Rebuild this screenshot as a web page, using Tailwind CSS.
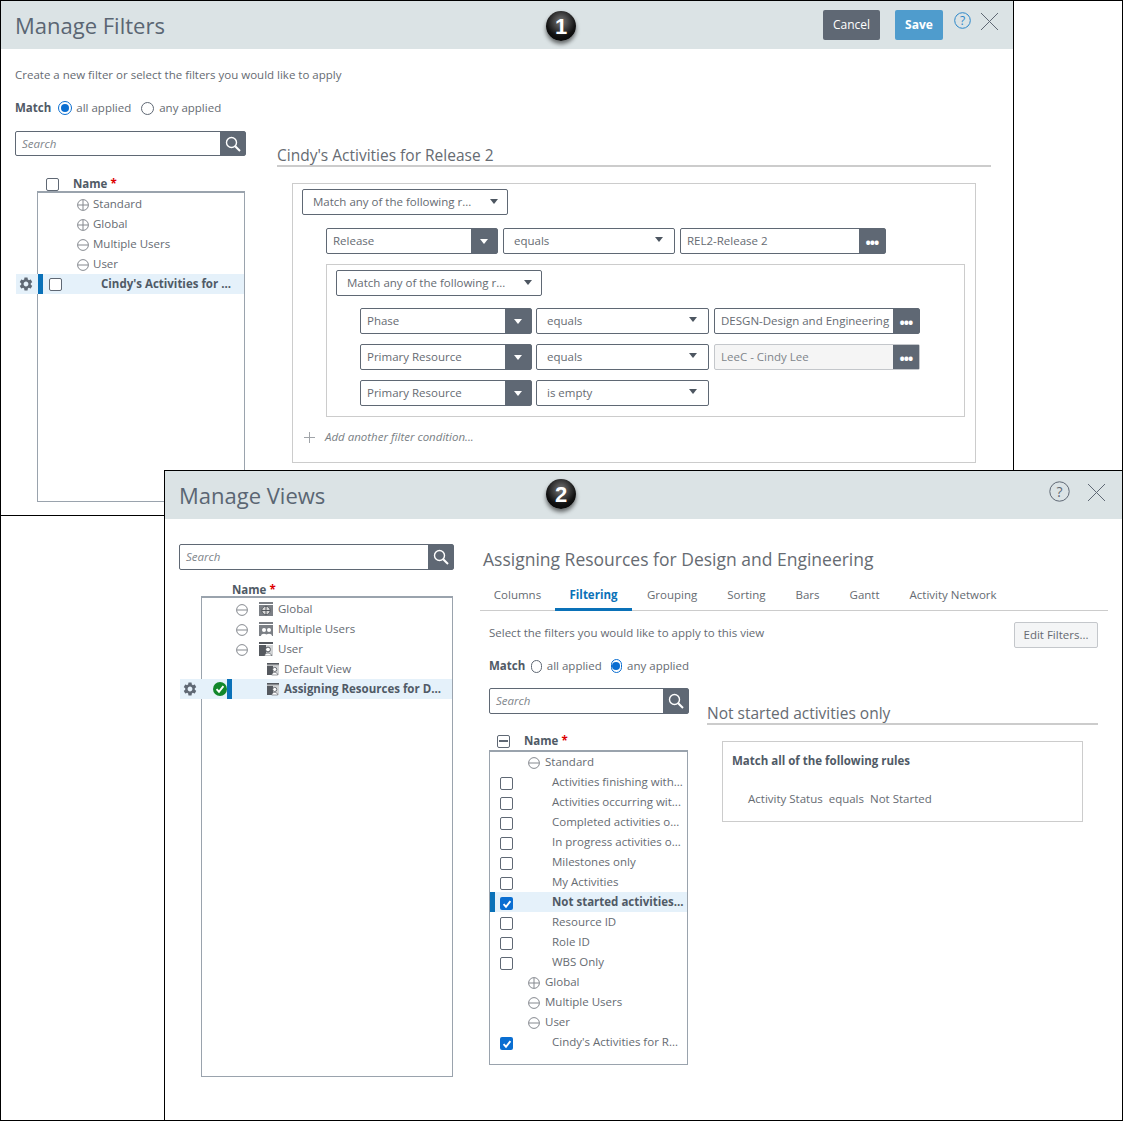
<!DOCTYPE html>
<html><head><meta charset="utf-8"><title>Manage Filters and Views</title>
<script src="https://cdn.jsdelivr.net/npm/@tailwindcss/browser@4"></script></head>
<body class="m-0 bg-white">
<svg class="hidden"><defs>
<symbol id="gear" viewBox="0 0 24 24"><path fill="#5f6874" d="M19.14 12.94c.04-.3.06-.61.06-.94 0-.32-.02-.64-.07-.94l2.03-1.58c.18-.14.23-.41.12-.61l-1.92-3.32c-.12-.22-.37-.29-.59-.22l-2.39.96c-.5-.38-1.03-.7-1.62-.94l-.36-2.54c-.04-.24-.24-.41-.48-.41h-3.84c-.24 0-.43.17-.47.41l-.36 2.54c-.59.24-1.13.57-1.62.94l-2.39-.96c-.22-.08-.47 0-.59.22L2.74 8.87c-.12.21-.08.47.12.61l2.03 1.58c-.05.3-.09.63-.09.94s.02.64.07.94l-2.03 1.58c-.18.14-.23.41-.12.61l1.92 3.32c.12.22.37.29.59.22l2.39-.96c.5.38 1.03.7 1.62.94l.36 2.54c.05.24.24.41.48.41h3.84c.24 0 .44-.17.47-.41l.36-2.54c.59-.24 1.13-.56 1.62-.94l2.39.96c.22.08.47 0 .59-.22l1.92-3.32c.12-.22.07-.47-.12-.61l-2.01-1.58zM12 15.6c-1.98 0-3.6-1.62-3.6-3.6s1.62-3.6 3.6-3.6 3.6 1.62 3.6 3.6-1.62 3.6-3.6 3.6z"/></symbol>
<symbol id="mag" viewBox="0 0 16 16"><circle cx="6.5" cy="6.5" r="5" fill="none" stroke="#fff" stroke-width="1.4"/><path d="M10.2 10.2L15 15" stroke="#fff" stroke-width="2" fill="none"/></symbol>
<symbol id="plus" viewBox="0 0 12 12"><circle cx="6" cy="6" r="5.4" fill="none" stroke="#85898f"/><path d="M1 6H11M6 1V11" stroke="#85898f" fill="none"/></symbol>
<symbol id="minus" viewBox="0 0 12 12"><circle cx="6" cy="6" r="5.4" fill="none" stroke="#85898f"/><path d="M1 6H11" stroke="#85898f" fill="none"/></symbol>
<symbol id="tri" viewBox="0 0 8 5"><path d="M0 0H8L4 5Z"/></symbol>
<symbol id="chk" viewBox="0 0 14 14"><path d="M3 7.2L5.8 10.2L11 3.6" fill="none" stroke="#fff" stroke-width="2.2"/></symbol>
<symbol id="vglobal" viewBox="0 0 14 14"><rect width="14" height="14" fill="#7b7f85"/><rect y="2" width="14" height="1" fill="#fff"/><circle cx="7" cy="8.5" r="4.2" fill="#d6d6d6" stroke="#55595f"/><path d="M2.8 8.5H11.2M7 4.3V12.7" stroke="#55595f"/></symbol>
<symbol id="vusers" viewBox="0 0 14 14"><rect width="14" height="14" fill="#7b7f85"/><rect y="2" width="14" height="1" fill="#fff"/><circle cx="5" cy="8" r="2" fill="#fff"/><circle cx="10" cy="8" r="2" fill="#fff"/><path d="M2 14c0-3 6-3 6 0zM7 14c0-3 6-3 6 0z" fill="#fff"/></symbol>
<symbol id="vuser" viewBox="0 0 14 14"><rect width="14" height="14" fill="#55595f"/><rect y="2" width="14" height="1" fill="#fff"/><rect x="7" y="3" width="7" height="11" fill="#d0d2d4"/><circle cx="9" cy="7.5" r="2.4" fill="#fff" stroke="#55595f"/><path d="M5.5 14c0-4 7-4 7 0z" fill="#fff" stroke="#55595f" stroke-width=".7"/></symbol>
</defs></svg>

<main class="relative w-[1123px] h-[1121px] overflow-hidden border border-black font-['Open_Sans',sans-serif] text-[11.5px] text-[#666b72]">

<!-- Window 1 -->
<section class="absolute left-0 top-0 w-[1013px] h-[515px] border-r border-b border-black bg-white">
  <header class="relative flex items-center h-[48px] bg-[#dbe3e5] pl-[14px] pr-[14px]">
    <h1 class="text-[22px] leading-[48px] text-[#5a6673] font-normal pb-[1px]">Manage Filters</h1>
    <div class="absolute left-[545px] top-[10px] w-[30px] h-[30px] rounded-full bg-[radial-gradient(circle_at_50%_35%,#777,#111_60%,#000)] shadow-[0_3px_4px_rgba(0,0,0,.55)] flex items-center justify-center text-white font-bold text-[22px] font-['Liberation_Sans',sans-serif]">1</div>
    <div class="ml-auto flex items-start h-[48px] pt-[9px]">
      <button class="w-[57px] h-[30px] rounded-[2px] bg-[#5f6874] text-white text-[12px]">Cancel</button>
      <button class="ml-[15px] w-[48px] h-[30px] rounded-[2px] bg-[#4f9ccd] text-white text-[12px] font-bold">Save</button>
      <svg class="ml-[11px] mt-[2px] w-[17px] h-[17px]" viewBox="0 0 17 17"><circle cx="8.5" cy="8.5" r="7.8" fill="none" stroke="#2b87c9" stroke-width="1"/><text x="8.5" y="13" text-anchor="middle" font-size="12" fill="#2b87c9" font-family="Open Sans">?</text></svg>
      <svg class="ml-[9px] mt-[2px] w-[19px] h-[19px]" viewBox="0 0 19 19"><path d="M1 1L18 18M18 1L1 18" stroke="#5f6874" stroke-width="1" fill="none"/></svg>
    </div>
  </header>
  <div class="pl-[14px]">
    <p class="mt-[17px] h-[18px] leading-[18px]">Create a new filter or select the filters you would like to apply</p>
    <div class="mt-[15px] h-[18px] flex items-center">
      <b class="font-bold text-[#505a66] mr-[7px]">Match</b>
      <span class="w-[14px] h-[14px] rounded-full border border-[#0a6ed1] flex items-center justify-center mr-[4px]"><span class="w-[8px] h-[8px] rounded-full bg-[#0a6ed1]"></span></span>
      <span class="mr-[10px]">all applied</span>
      <span class="w-[13px] h-[13px] rounded-full border border-[#5f6874] mr-[5px]"></span>
      <span>any applied</span>
    </div>
    <div class="mt-[14px] flex items-start">
      <div class="w-[231px]">
        <div class="flex h-[25px] border border-[#5f6874] rounded-[2px]">
          <span class="flex-1 pl-[6px] leading-[23px] italic text-[#80858b]">Search</span>
          <span class="w-[25px] bg-[#5f6874] flex items-center justify-center"><svg class="w-[16px] h-[16px]"><use href="#mag"/></svg></span>
        </div>
        <div class="mt-[20px] h-[16px] flex items-center">
          <span class="ml-[31px] w-[13px] h-[13px] border border-[#5f6874] rounded-[2px]"></span>
          <b class="ml-[14px] font-bold text-[#505a66]">Name <span class="text-[#d00]">*</span></b>
        </div>
        <div class="relative -mt-[1px] ml-[22px] w-[208px] h-[311px] border border-[#9aa3ad] border-t-2 pt-[1px]">
          <div class="h-[20px] flex items-center pl-[39px]"><svg class="w-[12px] h-[12px] mt-[2px] mr-[4px]"><use href="#plus"/></svg>Standard</div>
          <div class="h-[20px] flex items-center pl-[39px]"><svg class="w-[12px] h-[12px] mt-[2px] mr-[4px]"><use href="#plus"/></svg>Global</div>
          <div class="h-[20px] flex items-center pl-[39px]"><svg class="w-[12px] h-[12px] mt-[2px] mr-[4px]"><use href="#minus"/></svg>Multiple Users</div>
          <div class="h-[20px] flex items-center pl-[39px]"><svg class="w-[12px] h-[12px] mt-[2px] mr-[4px]"><use href="#minus"/></svg>User</div>
          <div class="relative h-[20px] flex items-center bg-[#e5f1fa] font-bold text-[#505a66] pl-[63px]">
            <svg class="absolute -left-[19px] top-[3px] w-[15px] h-[15px]"><use href="#gear"/></svg>
            <span class="absolute -left-[22px] top-0 w-[22px] h-[20px] bg-[#e5f1fa]"></span>
            <svg class="absolute -left-[20px] top-[2px] w-[16px] h-[16px]"><use href="#gear"/></svg>
            <span class="absolute left-0 top-0 w-[5px] h-[20px] bg-[#0a71b8]"></span>
            <span class="absolute left-[11px] top-[4px] w-[13px] h-[13px] border border-[#5f6874] rounded-[2px] bg-white"></span>
            Cindy's Activities for ...
          </div>
        </div>
      </div>
      <div class="ml-[31px] w-[714px]">
        <h2 class="mt-[14px] h-[20px] leading-[20px] text-[15.5px] font-normal text-[#666b72]">Cindy's Activities for Release 2</h2>
        <div class="h-[2px] bg-[#ccc]"></div>
        <div class="mt-[16px] ml-[15px] w-[684px] h-[280px] border border-[#ccc] pl-[9px] pt-[5px]">
          <div class="flex items-center w-[206px] h-[26px] border border-[#5f6874] rounded-[2px] pl-[10px] pr-[9px]"><span class="flex-1">Match any of the following r...</span><svg class="w-[8px] h-[5px] text-[#4d5661] fill-current mb-[2px]"><use href="#tri"/></svg></div>
          <div class="mt-[13px] ml-[24px] flex h-[26px]">
            <div class="flex w-[172px] border border-[#5f6874] rounded-[2px]"><span class="flex-1 pl-[6px] leading-[24px]">Release</span><span class="w-[26px] bg-[#5f6874] flex items-center justify-center"><svg class="w-[8px] h-[5px] text-white fill-current"><use href="#tri"/></svg></span></div>
            <div class="flex items-center ml-[5px] w-[172px] border border-[#5f6874] rounded-[2px] pl-[10px] pr-[11px]"><span class="flex-1">equals</span><svg class="w-[8px] h-[5px] text-[#4d5661] fill-current mb-[3px]"><use href="#tri"/></svg></div>
            <div class="flex ml-[5px] w-[206px] border border-[#5f6874] rounded-[2px]"><span class="flex-1 pl-[6px] leading-[24px]">REL2-Release 2</span><span class="w-[26px] bg-[#5f6874] text-center text-white font-bold leading-[28px] text-[14px] tracking-[-1px]">•••</span></div>
          </div>
          <div class="mt-[10px] ml-[24px] w-[639px] h-[153px] border border-[#ccc] pl-[9px] pt-[5px]">
            <div class="flex items-center w-[206px] h-[26px] border border-[#5f6874] rounded-[2px] pl-[10px] pr-[9px]"><span class="flex-1">Match any of the following r...</span><svg class="w-[8px] h-[5px] text-[#4d5661] fill-current mb-[2px]"><use href="#tri"/></svg></div>
            <div class="mt-[12px] ml-[24px] flex h-[26px]">
              <div class="flex w-[172px] border border-[#5f6874] rounded-[2px]"><span class="flex-1 pl-[6px] leading-[24px]">Phase</span><span class="w-[26px] bg-[#5f6874] flex items-center justify-center"><svg class="w-[8px] h-[5px] text-white fill-current"><use href="#tri"/></svg></span></div>
              <div class="flex items-center ml-[4px] w-[173px] border border-[#5f6874] rounded-[2px] pl-[10px] pr-[11px]"><span class="flex-1">equals</span><svg class="w-[8px] h-[5px] text-[#4d5661] fill-current mb-[3px]"><use href="#tri"/></svg></div>
              <div class="flex ml-[5px] w-[206px] border border-[#5f6874] rounded-[2px]"><span class="flex-1 pl-[6px] leading-[24px] whitespace-nowrap">DESGN-Design and Engineering</span><span class="w-[26px] bg-[#5f6874] text-center text-white font-bold leading-[28px] text-[14px] tracking-[-1px]">•••</span></div>
            </div>
            <div class="mt-[10px] ml-[24px] flex h-[26px]">
              <div class="flex w-[172px] border border-[#5f6874] rounded-[2px]"><span class="flex-1 pl-[6px] leading-[24px]">Primary Resource</span><span class="w-[26px] bg-[#5f6874] flex items-center justify-center"><svg class="w-[8px] h-[5px] text-white fill-current"><use href="#tri"/></svg></span></div>
              <div class="flex items-center ml-[4px] w-[173px] border border-[#5f6874] rounded-[2px] pl-[10px] pr-[11px]"><span class="flex-1">equals</span><svg class="w-[8px] h-[5px] text-[#4d5661] fill-current mb-[3px]"><use href="#tri"/></svg></div>
              <div class="flex ml-[5px] w-[206px] border border-[#c4c7cb] rounded-[2px] bg-[#f5f5f5]"><span class="flex-1 pl-[6px] leading-[24px] text-[#80858b]">LeeC - Cindy Lee</span><span class="w-[26px] bg-[#5f6874] text-center text-white font-bold leading-[28px] text-[14px] tracking-[-1px]">•••</span></div>
            </div>
            <div class="mt-[10px] ml-[24px] flex h-[26px]">
              <div class="flex w-[172px] border border-[#5f6874] rounded-[2px]"><span class="flex-1 pl-[6px] leading-[24px]">Primary Resource</span><span class="w-[26px] bg-[#5f6874] flex items-center justify-center"><svg class="w-[8px] h-[5px] text-white fill-current"><use href="#tri"/></svg></span></div>
              <div class="flex items-center ml-[4px] w-[173px] border border-[#5f6874] rounded-[2px] pl-[10px] pr-[11px]"><span class="flex-1">is empty</span><svg class="w-[8px] h-[5px] text-[#4d5661] fill-current mb-[3px]"><use href="#tri"/></svg></div>
            </div>
          </div>
          <div class="mt-[12px] flex items-center h-[16px] italic text-[#7a7f85]"><svg class="ml-[2px] mr-[10px] w-[11px] h-[11px]" viewBox="0 0 11 11"><path d="M5.5 0V11M0 5.5H11" stroke="#a0a4a9" fill="none"/></svg>Add another filter condition...</div>
        </div>
      </div>
    </div>
  </div>
</section>

<!-- Window 2 -->
<section class="absolute left-[163px] top-[469px] w-[958px] h-[650px] border-l border-t border-black bg-white">
  <header class="relative flex items-center h-[48px] bg-[#dbe3e5] pl-[14px]">
    <h1 class="text-[22px] leading-[48px] text-[#5a6673] font-normal pb-[1px]">Manage Views</h1>
    <div class="absolute left-[381px] top-[8px] w-[30px] h-[30px] rounded-full bg-[radial-gradient(circle_at_50%_35%,#777,#111_60%,#000)] shadow-[0_3px_4px_rgba(0,0,0,.55)] flex items-center justify-center text-white font-bold text-[22px] font-['Liberation_Sans',sans-serif]">2</div>
    <svg class="absolute left-[884px] top-[10px] w-[21px] h-[21px]" viewBox="0 0 21 21"><circle cx="10.5" cy="10.5" r="9.7" fill="none" stroke="#5f6874" stroke-width="1"/><text x="10.5" y="15.5" text-anchor="middle" font-size="14" fill="#5f6874" font-family="Open Sans">?</text></svg>
    <svg class="absolute left-[922px] top-[12px] w-[19px] h-[19px]" viewBox="0 0 19 19"><path d="M1 1L18 18M18 1L1 18" stroke="#5f6874" stroke-width="1" fill="none"/></svg>
  </header>
  <div class="flex items-start pl-[14px]">
    <div class="w-[275px] mt-[25px]">
      <div class="flex h-[26px] border border-[#5f6874] rounded-[2px]">
        <span class="flex-1 pl-[6px] leading-[24px] italic text-[#80858b]">Search</span>
        <span class="w-[25px] bg-[#5f6874] flex items-center justify-center"><svg class="w-[16px] h-[16px]"><use href="#mag"/></svg></span>
      </div>
      <div class="mt-[12px] h-[16px] flex items-center pl-[53px]"><b class="font-bold text-[#505a66]">Name <span class="text-[#d00]">*</span></b></div>
      <div class="relative -mt-[2px] ml-[22px] w-[252px] h-[481px] border border-[#9aa3ad] border-t-2 pt-[1px]">
        <div class="h-[20px] flex items-center pl-[34px]"><svg class="w-[12px] h-[12px] mt-[2px] mr-[11px]"><use href="#minus"/></svg><svg class="w-[14px] h-[14px] mr-[5px]"><use href="#vglobal"/></svg>Global</div>
        <div class="h-[20px] flex items-center pl-[34px]"><svg class="w-[12px] h-[12px] mt-[2px] mr-[11px]"><use href="#minus"/></svg><svg class="w-[14px] h-[14px] mr-[5px]"><use href="#vusers"/></svg>Multiple Users</div>
        <div class="h-[20px] flex items-center pl-[34px]"><svg class="w-[12px] h-[12px] mt-[2px] mr-[11px]"><use href="#minus"/></svg><svg class="w-[14px] h-[14px] mr-[5px]"><use href="#vuser"/></svg>User</div>
        <div class="h-[20px] flex items-center pl-[65px]"><svg class="w-[12px] h-[14px] mr-[5px]"><use href="#vuser"/></svg>Default View</div>
        <div class="relative h-[20px] flex items-center bg-[#e5f1fa] font-bold text-[#505a66] pl-[65px] whitespace-nowrap">
          <span class="absolute -left-[22px] top-0 w-[22px] h-[20px] bg-[#e5f1fa]"></span>
          <svg class="absolute -left-[20px] top-[2px] w-[16px] h-[16px]"><use href="#gear"/></svg>
          <span class="absolute left-[11px] top-[3px] w-[14px] h-[14px] rounded-full bg-[#12872b] flex items-center justify-center"><svg class="w-[12px] h-[12px]"><use href="#chk"/></svg></span>
          <span class="absolute left-[25px] top-0 w-[5px] h-[20px] bg-[#0a71b8]"></span>
          <svg class="w-[12px] h-[14px] mr-[5px]"><use href="#vuser"/></svg>Assigning Resources for D...
        </div>
      </div>
    </div>
    <div class="ml-[29px] w-[625px]">
      <h2 class="mt-[29px] h-[22px] leading-[22px] text-[17.5px] font-normal text-[#666b72]">Assigning Resources for Design and Engineering</h2>
      <nav class="mt-[14px] ml-[-3px] flex h-[27px] border-b border-[#ccc] text-[#666b72]">
        <span class="w-[75px] text-center leading-[21px]">Columns</span>
        <span class="relative w-[77px] text-center leading-[21px] font-bold text-[#0a71b8]">Filtering<span class="absolute left-0 bottom-[-1px] w-[77px] h-[3px] bg-[#0a71b8]"></span></span>
        <span class="ml-[15px] leading-[21px]">Grouping</span>
        <span class="ml-[30px] leading-[21px]">Sorting</span>
        <span class="ml-[30px] leading-[21px]">Bars</span>
        <span class="ml-[30px] leading-[21px]">Gantt</span>
        <span class="ml-[30px] leading-[21px]">Activity Network</span>
      </nav>
      <div class="flex items-start pl-[6px]">
        <div class="w-[200px]">
          <p class="mt-[13px] h-[18px] leading-[18px] whitespace-nowrap">Select the filters you would like to apply to this view</p>
          <div class="mt-[15px] h-[18px] flex items-center">
            <b class="font-bold text-[#505a66] mr-[6px]">Match</b>
            <span class="w-[13px] h-[13px] rounded-full border border-[#5f6874] mr-[5px]"></span>
            <span class="mr-[9px] whitespace-nowrap">all applied</span>
            <span class="w-[14px] h-[14px] rounded-full border border-[#0a6ed1] flex items-center justify-center mr-[5px]"><span class="w-[8px] h-[8px] rounded-full bg-[#0a6ed1] shrink-0"></span></span>
            <span class="whitespace-nowrap">any applied</span>
          </div>
          <div class="mt-[13px] flex h-[26px] border border-[#5f6874] rounded-[2px]">
            <span class="flex-1 pl-[6px] leading-[24px] italic text-[#80858b]">Search</span>
            <span class="w-[25px] bg-[#5f6874] flex items-center justify-center"><svg class="w-[16px] h-[16px]"><use href="#mag"/></svg></span>
          </div>
          <div class="mt-[18px] h-[18px] flex items-center">
            <span class="ml-[8px] w-[13px] h-[13px] border border-[#5f6874] rounded-[2px] flex items-center justify-center"><span class="w-[9px] h-[2px] bg-[#5f6874]"></span></span>
            <b class="ml-[14px] font-bold text-[#505a66]">Name <span class="text-[#d00]">*</span></b>
          </div>
          <div class="w-[199px] h-[315px] border border-[#9aa3ad] border-t-2 pt-[0px]">
            <div class="h-[20px] flex items-center pl-[38px]"><svg class="w-[12px] h-[12px] mt-[2px] mr-[5px]"><use href="#minus"/></svg>Standard</div>
            <div class="h-[20px] flex items-center pl-[62px] relative"><span class="absolute left-[10px] top-[5px] w-[13px] h-[13px] border border-[#5f6874] rounded-[2px]"></span>Activities finishing with...</div>
            <div class="h-[20px] flex items-center pl-[62px] relative"><span class="absolute left-[10px] top-[5px] w-[13px] h-[13px] border border-[#5f6874] rounded-[2px]"></span>Activities occurring wit...</div>
            <div class="h-[20px] flex items-center pl-[62px] relative"><span class="absolute left-[10px] top-[5px] w-[13px] h-[13px] border border-[#5f6874] rounded-[2px]"></span>Completed activities o...</div>
            <div class="h-[20px] flex items-center pl-[62px] relative"><span class="absolute left-[10px] top-[5px] w-[13px] h-[13px] border border-[#5f6874] rounded-[2px]"></span>In progress activities o...</div>
            <div class="h-[20px] flex items-center pl-[62px] relative"><span class="absolute left-[10px] top-[5px] w-[13px] h-[13px] border border-[#5f6874] rounded-[2px]"></span>Milestones only</div>
            <div class="h-[20px] flex items-center pl-[62px] relative"><span class="absolute left-[10px] top-[5px] w-[13px] h-[13px] border border-[#5f6874] rounded-[2px]"></span>My Activities</div>
            <div class="h-[20px] flex items-center pl-[62px] relative bg-[#e5f1fa] font-bold text-[#505a66] whitespace-nowrap"><span class="absolute left-0 top-0 w-[5px] h-[20px] bg-[#0a71b8]"></span><span class="absolute left-[10px] top-[5px] w-[13px] h-[13px] rounded-[2px] bg-[#0a6ed1] flex items-center justify-center"><svg class="w-[12px] h-[12px]"><use href="#chk"/></svg></span>Not started activities...</div>
            <div class="h-[20px] flex items-center pl-[62px] relative"><span class="absolute left-[10px] top-[5px] w-[13px] h-[13px] border border-[#5f6874] rounded-[2px]"></span>Resource ID</div>
            <div class="h-[20px] flex items-center pl-[62px] relative"><span class="absolute left-[10px] top-[5px] w-[13px] h-[13px] border border-[#5f6874] rounded-[2px]"></span>Role ID</div>
            <div class="h-[20px] flex items-center pl-[62px] relative"><span class="absolute left-[10px] top-[5px] w-[13px] h-[13px] border border-[#5f6874] rounded-[2px]"></span>WBS Only</div>
            <div class="h-[20px] flex items-center pl-[38px]"><svg class="w-[12px] h-[12px] mt-[2px] mr-[5px]"><use href="#plus"/></svg>Global</div>
            <div class="h-[20px] flex items-center pl-[38px]"><svg class="w-[12px] h-[12px] mt-[2px] mr-[5px]"><use href="#minus"/></svg>Multiple Users</div>
            <div class="h-[20px] flex items-center pl-[38px]"><svg class="w-[12px] h-[12px] mt-[2px] mr-[5px]"><use href="#minus"/></svg>User</div>
            <div class="h-[20px] flex items-center pl-[62px] relative"><span class="absolute left-[10px] top-[5px] w-[13px] h-[13px] rounded-[2px] bg-[#0a6ed1] flex items-center justify-center"><svg class="w-[12px] h-[12px]"><use href="#chk"/></svg></span>Cindy's Activities for R...</div>
          </div>
        </div>
        <div class="ml-[18px] w-[391px]">
          <div class="flex justify-end"><button class="mt-[11px] w-[84px] h-[26px] border border-[#c4c7cb] rounded-[2px] bg-[#f4f5f6] text-[#666b72] text-[11.5px]">Edit Filters...</button></div>
          <h2 class="mt-[55px] h-[20px] leading-[20px] text-[15.5px] font-normal text-[#666b72]">Not started activities only</h2>
          <div class="h-[2px] bg-[#ccc]"></div>
          <div class="mt-[16px] ml-[15px] w-[361px] h-[81px] border border-[#ccc] pl-[9px] pt-[10px]">
            <b class="block h-[18px] leading-[18px] font-bold text-[#505a66]">Match all of the following rules</b>
            <p class="mt-[20px] ml-[16px] h-[18px] leading-[18px]">Activity Status&nbsp; equals&nbsp; Not Started</p>
          </div>
        </div>
      </div>
    </div>
  </div>
</section>
</main>
</body></html>
